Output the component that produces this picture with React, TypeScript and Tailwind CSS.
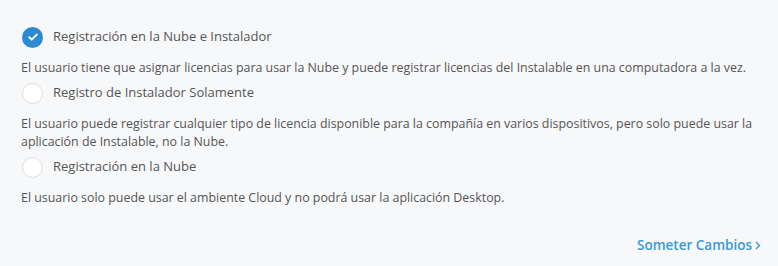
import React, { useState } from "react";

const options = [
  {
    id: "both",
    label: "Registración en la Nube e Instalador",
    desc: "El usuario tiene que asignar licencias para usar la Nube y puede registrar licencias del Instalable en una computadora a la vez.",
  },
  {
    id: "installer",
    label: "Registro de Instalador Solamente",
    desc: "El usuario puede registrar cualquier tipo de licencia disponible para la compañía en varios dispositivos, pero solo puede usar la aplicación de Instalable, no la Nube.",
  },
  {
    id: "cloud",
    label: "Registración en la Nube",
    desc: "El usuario solo puede usar el ambiente Cloud y no podrá usar la aplicación Desktop.",
  },
];

function Radio({ checked }: { checked: boolean }) {
  if (checked) {
    return (
      <span className="w-[21px] h-[21px] rounded-full bg-[#2c8bd0] flex items-center justify-center shrink-0">
        <svg width="12" height="12" viewBox="0 0 12 12" fill="none">
          <path d="M2.3 6.2l2.4 2.4 5-5" stroke="#fff" strokeWidth="2" strokeLinecap="round" strokeLinejoin="round" />
        </svg>
      </span>
    );
  }
  return <span className="w-[21px] h-[21px] rounded-full bg-white border border-[#dcdcdc] shrink-0" />;
}

export default function App() {
  const [selected, setSelected] = useState("both");

  return (
    <div className="w-[778px] h-[266px] bg-[#f7f8fa] font-['Open_Sans',sans-serif] text-[#555]">
      <div className="pl-[21px] pr-4 pt-[26px]">
        {options.map((o) => (
          <div key={o.id}>
            <button
              type="button"
              onClick={() => setSelected(o.id)}
              className="flex items-center gap-[10px] pl-px h-[22px]"
            >
              <Radio checked={selected === o.id} />
              <span className="text-[13px] text-[#555]">{o.label}</span>
            </button>
            <p className="text-[12.4px] leading-[18px] mt-[11px] mb-[5px] text-[#555]">{o.desc}</p>
          </div>
        ))}
      </div>
      <div className="flex justify-end pr-[17px] mt-[28px]">
        <button type="button" className="flex items-center gap-[3px] text-[13.5px] font-semibold text-[#3a98d7]">
          Someter Cambios
          <svg width="6" height="9" viewBox="0 0 6 9" fill="none">
            <path d="M1 1l3.5 3.5L1 8" stroke="#3a98d7" strokeWidth="1.4" />
          </svg>
        </button>
      </div>
    </div>
  );
}
